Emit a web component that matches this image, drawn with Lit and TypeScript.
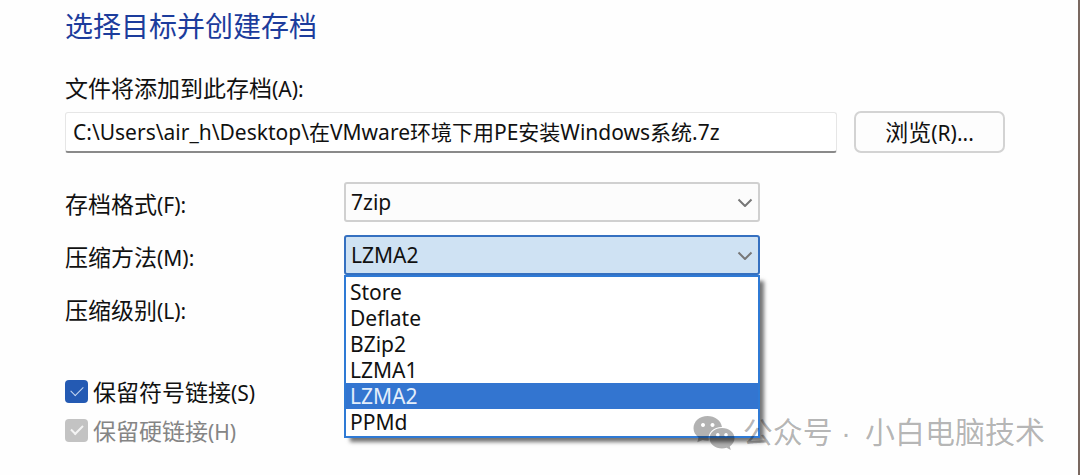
import { LitElement, html, css, svg } from "lit";
import { customElement, property, state } from "lit/decorators.js";
import { classMap } from "lit/directives/class-map.js";

const METHODS = ["Store", "Deflate", "BZip2", "LZMA1", "LZMA2", "PPMd"];

const chevron = html`<svg class="chevron" viewBox="0 0 16 10" aria-hidden="true">
  ${svg`<path d="M1.5 1.5 L8 8 L14.5 1.5" fill="none" stroke="#777" stroke-width="2" stroke-linejoin="round" />`}
</svg>`;

@customElement("archive-check")
export class ArchiveCheck extends LitElement {
  @property() label = "";
  @property() key = "";
  @property({ type: Boolean }) locked = false;

  static styles = css`
    :host {
      display: block;
    }
    .check {
      display: flex;
      align-items: center;
      gap: 5px;
      line-height: 38px;
    }
    .key {
      font-family: "Noto Sans", sans-serif;
      font-size: 21px;
      line-height: 1;
    }
    .box {
      appearance: none;
      box-sizing: border-box;
      width: 23px;
      height: 23px;
      margin: 0;
      border-radius: 4px;
      display: grid;
      place-items: center;
      background: #245ab3;
    }
    .box:disabled {
      background: #c3c3c3;
    }
    .box:checked::before {
      content: "";
      box-sizing: border-box;
      width: 12px;
      height: 7px;
      border: solid #c4d6f0;
      border-width: 0 0 1px 1px;
      transform: translateY(-2px) rotate(-45deg);
    }
    .box:disabled::before {
      border-color: #f4f4f4;
      border-width: 0 0 2px 2px;
    }
    .locked {
      color: #858585;
    }
  `;

  render() {
    return html`<label class=${classMap({ check: true, locked: this.locked })}>
      <input class="box" type="checkbox" checked ?disabled=${this.locked} />
      <span>${this.label}<span class="key">${this.key}</span></span>
    </label>`;
  }
}

@customElement("app-root")
export class AppRoot extends LitElement {
  @state() private method = "LZMA2";

  static styles = css`
    :host {
      display: block;
      box-sizing: border-box;
      min-height: 100vh;
      overflow: hidden;
      position: relative;
      background: #fefefe;
      border-right: 2px solid #796860;
      color: #111;
      font-family: "Noto Sans CJK SC", sans-serif;
      font-size: 23px;
      line-height: 36px;
    }
    .page {
      padding: 5px 73px 0 65px;
    }
    .title {
      margin: 0;
      font-size: 28px;
      font-weight: 400;
      line-height: 40px;
      color: #1c3c9c;
    }
    .caption {
      display: block;
      margin-top: 24px;
    }
    .key,
    .path,
    .select,
    .list {
      font-family: "Noto Sans", "Noto Sans CJK SC", sans-serif;
      font-size: 21px;
    }
    .target {
      display: flex;
      align-items: center;
      gap: 17px;
      margin-top: 4px;
    }
    .path,
    .browse,
    .select {
      box-sizing: border-box;
      color: inherit;
      margin: 0;
    }
    .path {
      flex: 1;
      min-width: 0;
      height: 41px;
      padding: 0 7px 2px;
      border: 1px solid #e6e6e6;
      border-bottom: 2px solid #8a8a8a;
      border-radius: 3px;
      background: #fff;
      outline: none;
    }
    .browse {
      width: 151px;
      height: 42px;
      padding: 0 0 2px;
      border: 2px solid #d3d3d3;
      border-radius: 7px;
      background: #fdfdfd;
      font: inherit;
      line-height: 36px;
    }
    .options {
      display: grid;
      grid-template-columns: 279px minmax(0, 416px);
      grid-auto-rows: 40px;
      row-gap: 13px;
      align-items: center;
      margin-top: 29px;
    }
    .name {
      padding-top: 4px;
    }
    .combo {
      position: relative;
    }
    .select {
      display: block;
      appearance: none;
      width: 100%;
      height: 40px;
      padding: 0 5px;
      border: 2px solid #d0d0d0;
      border-radius: 3px;
      background: #fcfcfc;
      outline: none;
    }
    .open .select {
      border-color: #3570c0;
      background: #cfe2f3;
    }
    .chevron {
      position: absolute;
      right: 7px;
      top: 16px;
      width: 16px;
      height: 10px;
      pointer-events: none;
    }
    .list {
      position: absolute;
      z-index: 1;
      top: 100%;
      left: 0;
      right: 0;
      margin: 0;
      padding: 2px 0 1px;
      border: 2px solid #2f7ad5;
      background: #fff;
      list-style: none;
      line-height: 26px;
      box-shadow: 5px 5px 4px -1px rgba(0, 0, 0, 0.55);
    }
    .item {
      padding: 0 4px;
      cursor: default;
    }
    .chosen {
      background: #3375d0;
      color: #e4eefb;
    }
    .checks {
      margin-top: 44px;
      display: grid;
      row-gap: 1px;
    }
    .watermark {
      position: absolute;
      z-index: 2;
      right: 33px;
      bottom: 22px;
      display: flex;
      align-items: center;
      gap: 8px;
      font-size: 30px;
      line-height: 40px;
      color: rgba(0, 0, 0, 0.3);
    }
    .brand {
      display: flex;
      gap: 14px;
      font-family: "Liberation Sans", "Noto Sans CJK SC", sans-serif;
    }
    .wechat {
      width: 42px;
      height: 34px;
    }
  `;

  render() {
    return html`
      <main class="page">
        <h1 class="title">选择目标并创建存档</h1>
        <label class="caption" for="path">文件将添加到此存档<span class="key">(A):</span></label>
        <div class="target">
          <input class="path" id="path" type="text" spellcheck="false"
            value="C:\\Users\\air_h\\Desktop\\在VMware环境下用PE安装Windows系统.7z" />
          <button class="browse" type="button">浏览<span class="key">(R)...</span></button>
        </div>
        <div class="options">
          <label class="name" for="format">存档格式<span class="key">(F):</span></label>
          <div class="combo">
            <select class="select" id="format"><option>7zip</option></select>
            ${chevron}
          </div>
          <label class="name" for="method">压缩方法<span class="key">(M):</span></label>
          <div class="combo open">
            <select class="select" id="method" .value=${this.method}>
              ${METHODS.map((m) => html`<option ?selected=${m === this.method}>${m}</option>`)}
            </select>
            ${chevron}
            <ul class="list" role="listbox" aria-label="压缩方法">
              ${METHODS.map(
                (m) => html`<li
                  class=${classMap({ item: true, chosen: m === this.method })}
                  role="option"
                  aria-selected=${m === this.method}
                  @click=${() => (this.method = m)}
                >${m}</li>`
              )}
            </ul>
          </div>
          <span class="name">压缩级别<span class="key">(L):</span></span>
        </div>
        <div class="checks">
          <archive-check label="保留符号链接" key="(S)"></archive-check>
          <archive-check label="保留硬链接" key="(H)" locked></archive-check>
        </div>
      </main>
      <div class="watermark">
        <svg class="wechat" viewBox="0 0 42 34" aria-hidden="true">
          <path fill="#000" fill-opacity="0.3" fill-rule="evenodd"
            d="M14.500 0 C6.500 0 0.500 5.300 0.500 12.300 C0.500 16.100 2.500 19.300 5.500 21.500 L4.300 26.300 L9.600 23.900 C11.600 24.500 13.600 24.800 16 24.600 C14 17 20.500 11 29 11 C27.800 4 21.800 0 14.500 0 Z
            M10 7 a2 2 0 1 0 0.010 0 Z M19.500 7 a2 2 0 1 0 0.010 0 Z
            M29 12 C22 12 16.500 16.800 16.500 22.300 C16.500 28 22 32.500 29 32.500 C30.700 32.500 32.200 32.200 33.600 31.800 L37.800 34 L36.800 30.400 C39.600 28.500 41.500 25.700 41.500 22.300 C41.500 16.800 36 12 29 12 Z
            M24.800 17 a1.800 1.800 0 1 0 0.010 0 Z M33 17 a1.800 1.800 0 1 0 0.010 0 Z" />
        </svg>
        <div class="brand"><span>公众号 ·</span><span>小白电脑技术</span></div>
      </div>
    `;
  }
}
